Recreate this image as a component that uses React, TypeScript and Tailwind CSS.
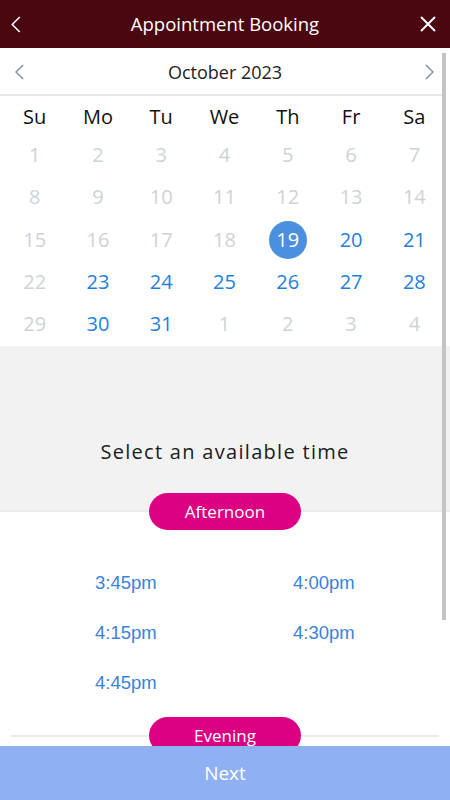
import React from 'react';

const days = ['Su', 'Mo', 'Tu', 'We', 'Th', 'Fr', 'Sa'];

type Cell = { d: number; on: boolean; sel?: boolean };

const weeks: Cell[][] = [
  [1, 2, 3, 4, 5, 6, 7].map((d) => ({ d, on: false })),
  [8, 9, 10, 11, 12, 13, 14].map((d) => ({ d, on: false })),
  [
    { d: 15, on: false },
    { d: 16, on: false },
    { d: 17, on: false },
    { d: 18, on: false },
    { d: 19, on: true, sel: true },
    { d: 20, on: true },
    { d: 21, on: true },
  ],
  [
    { d: 22, on: false },
    ...[23, 24, 25, 26, 27, 28].map((d) => ({ d, on: true })),
  ],
  [
    { d: 29, on: false },
    { d: 30, on: true },
    { d: 31, on: true },
    ...[1, 2, 3, 4].map((d) => ({ d, on: false })),
  ],
];

const slots = ['3:45pm', '4:00pm', '4:15pm', '4:30pm', '4:45pm'];

const Chevron = ({ dir, className }: { dir: 'left' | 'right'; className: string }) => (
  <svg viewBox="0 0 10 18" className={className} fill="none" stroke="currentColor" strokeWidth={1.6}>
    {dir === 'left' ? <path d="M9 1 1 9l8 8" /> : <path d="M1 1l8 8-8 8" />}
  </svg>
);

const App: React.FC = () => {
  return (
    <div
      className="relative w-[450px] h-[800px] overflow-hidden bg-white"
      style={{ fontFamily: '"Open Sans", "Noto Sans", sans-serif' }}
    >
      {/* header */}
      <div className="h-[48px] bg-[#4a0710] flex items-center text-white">
        <div className="w-[48px] pl-[11px]">
          <Chevron dir="left" className="w-[10px] h-[17px]" />
        </div>
        <span className="flex-1 text-center text-[18.5px] leading-none">Appointment Booking</span>
        <div className="w-[48px] flex justify-end pr-[14px]">
          <svg viewBox="0 0 16 16" className="w-[16px] h-[16px]" stroke="currentColor" strokeWidth={2}>
            <path d="M1 1l14 14M15 1 1 15" />
          </svg>
        </div>
      </div>

      {/* month switcher */}
      <div className="h-[48px] flex items-center mr-[7px] border-b-2 border-[#e6eaed]">
        <div className="w-[40px] pl-[15px] pt-[2px]">
          <Chevron dir="left" className="w-[9px] h-[16px] text-[#7f8d99]" />
        </div>
        <span className="flex-1 text-center text-[18px] text-[#222] pt-[2px] pl-[7px]">October 2023</span>
        <div className="w-[40px] flex justify-end pr-[9px] pt-[2px]">
          <Chevron dir="right" className="w-[9px] h-[16px] text-[#7f8d99]" />
        </div>
      </div>

      {/* calendar */}
      <div className="ml-[3px] w-[443px] pt-[4px]">
        <div className="grid grid-cols-7 h-[34px] items-center">
          {days.map((d) => (
            <div key={d} className="text-center text-[20px] text-[#111]">
              {d}
            </div>
          ))}
        </div>
        {weeks.map((w, i) => (
          <div key={i} className="grid grid-cols-7 h-[42.3px] items-center">
            {w.map((c, j) => (
              <div key={j} className="flex justify-center">
                {c.sel ? (
                  <span className="w-[38px] h-[38px] rounded-full bg-[#4a8fe0] text-white flex items-center justify-center text-[20px]">
                    {c.d}
                  </span>
                ) : (
                  <span className={`text-[20px] ${c.on ? 'text-[#1f7fe0]' : 'text-[#cdd3d7]'}`}>{c.d}</span>
                )}
              </div>
            ))}
          </div>
        ))}
      </div>

      {/* time heading */}
      <div className="mt-[1px] h-[166px] bg-[#f2f2f2] border-b-2 border-[#e8ecef] flex flex-col items-center">
        <div className="mt-[91px] text-[20px] tracking-[1.3px] text-[#1c1c1c]">Select an available time</div>
      </div>
      <div className="flex justify-center mt-[-19px]">
        <div className="w-[152px] h-[37px] rounded-full bg-[#dc0082] text-white text-[17px] flex items-center justify-center">
          Afternoon
        </div>
      </div>

      {/* slots */}
      <div
        className="grid grid-cols-[198px_198px] pl-[95px] mt-[42px] gap-y-[28px] text-[18.5px] leading-[22px] text-[#3b82d9]"
        style={{ fontFamily: '"Liberation Sans", Arial, sans-serif' }}
      >
        {slots.map((s) => (
          <div key={s}>{s}</div>
        ))}
      </div>

      {/* evening divider */}
      <div className="relative mt-[23px] mx-[11px] h-[40px]">
        <div className="absolute left-0 right-0 top-[18px] border-t-2 border-[#e8ecef]" />
        <div className="absolute left-[138px] top-0 w-[152px] h-[37px] rounded-full bg-[#dc0082] text-white text-[17px] flex items-center justify-center">
          Evening
        </div>
      </div>

      {/* next */}
      <div className="absolute left-0 right-0 bottom-0 h-[54px] bg-[#8fb0f2] text-white text-[19px] flex items-center justify-center">
        Next
      </div>

      {/* scrollbar thumb */}
      <div className="absolute left-[442px] top-[53px] w-[4px] h-[567px] bg-[#c4c4c4]" />
    </div>
  );
};

export default App;
